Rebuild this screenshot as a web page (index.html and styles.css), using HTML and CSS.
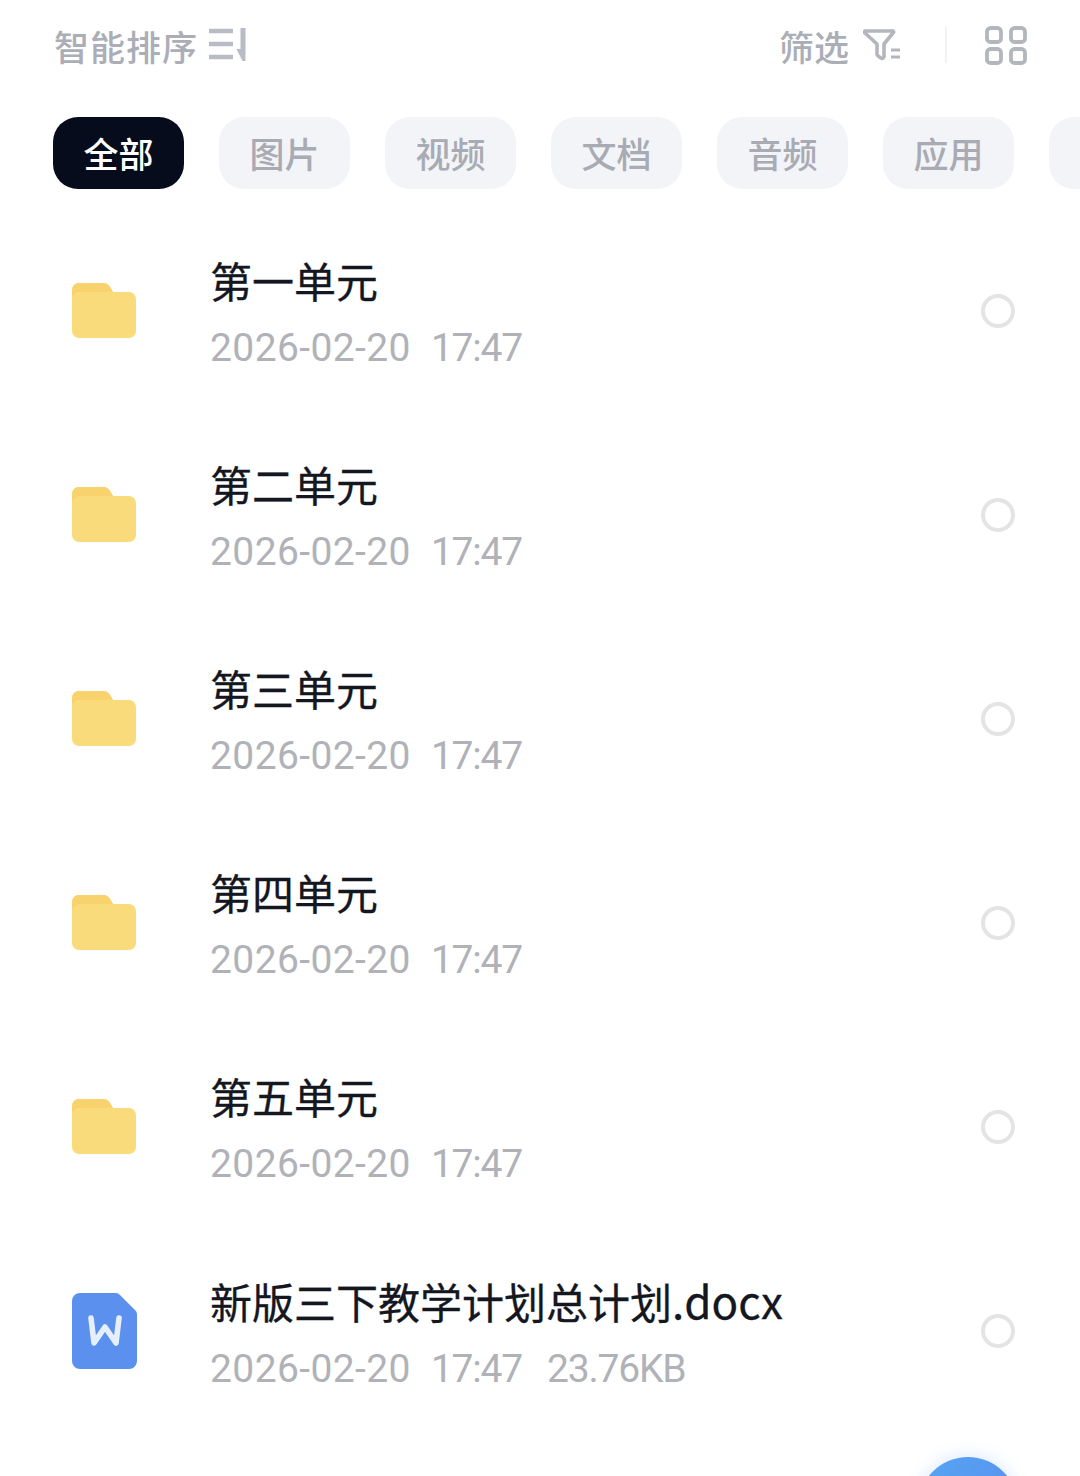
FILE: index.html
```html
<!DOCTYPE html>
<html>
  <head>
    <title>文件列表</title>
    <link rel="stylesheet" href="styles.css">
  </head>
  <body>
    <div class="toolbar">
      <div class="sort">
        <span>智能排序</span>
        <svg class="sort-icon" width="40" height="36" viewBox="0 0 40 36">
          <path d="M1 4h24M1 17h24M1 30h24" stroke="#b9bcc4" stroke-width="4.4" fill="none"/>
          <path d="M32.5 1h5v33h-3L28.5 22h4z" fill="#b9bcc4"/>
        </svg>
      </div>
      <div class="tools">
        <span>筛选</span>
        <svg class="filter-icon" width="38" height="34" viewBox="0 0 38 34">
          <path d="M3 3h26a1 1 0 0 1 1 2l-9 11v13a2 2 0 0 1-3 1l-3-2a3 3 0 0 1-1-2V16L2 5a1 1 0 0 1 1-2z" stroke="#b3b6bd" stroke-width="3.6" fill="none" stroke-linejoin="round"/>
          <path d="M28 22h9M28 29h9" stroke="#b3b6bd" stroke-width="3" fill="none"/>
        </svg>
        <div class="divider"></div>
        <svg class="grid-icon" width="42" height="39" viewBox="0 0 42 39">
          <rect x="2" y="2" width="14" height="14" rx="3.5" stroke="#b3b6bd" stroke-width="3.8" fill="none"/>
          <rect x="26" y="2" width="14" height="14" rx="3.5" stroke="#b3b6bd" stroke-width="3.8" fill="none"/>
          <rect x="2" y="23" width="14" height="14" rx="3.5" stroke="#b3b6bd" stroke-width="3.8" fill="none"/>
          <rect x="26" y="23" width="14" height="14" rx="3.5" stroke="#b3b6bd" stroke-width="3.8" fill="none"/>
        </svg>
      </div>
    </div>

    <div class="tabs">
      <div class="tab active">全部</div>
      <div class="tab">图片</div>
      <div class="tab">视频</div>
      <div class="tab">文档</div>
      <div class="tab">音频</div>
      <div class="tab">应用</div>
      <div class="tab"></div>
    </div>

    <ul class="files">
      <li class="file">
        <svg class="file-icon" width="64" height="56" viewBox="0 0 64 56"><use href="#folder"/></svg>
        <div class="info">
          <div class="name">第一单元</div>
          <div class="meta"><span class="date">2026-02-20</span><span class="time">17:47</span></div>
        </div>
        <div class="radio"></div>
      </li>
      <li class="file">
        <svg class="file-icon" width="64" height="56" viewBox="0 0 64 56"><use href="#folder"/></svg>
        <div class="info">
          <div class="name">第二单元</div>
          <div class="meta"><span class="date">2026-02-20</span><span class="time">17:47</span></div>
        </div>
        <div class="radio"></div>
      </li>
      <li class="file">
        <svg class="file-icon" width="64" height="56" viewBox="0 0 64 56"><use href="#folder"/></svg>
        <div class="info">
          <div class="name">第三单元</div>
          <div class="meta"><span class="date">2026-02-20</span><span class="time">17:47</span></div>
        </div>
        <div class="radio"></div>
      </li>
      <li class="file">
        <svg class="file-icon" width="64" height="56" viewBox="0 0 64 56"><use href="#folder"/></svg>
        <div class="info">
          <div class="name">第四单元</div>
          <div class="meta"><span class="date">2026-02-20</span><span class="time">17:47</span></div>
        </div>
        <div class="radio"></div>
      </li>
      <li class="file">
        <svg class="file-icon" width="64" height="56" viewBox="0 0 64 56"><use href="#folder"/></svg>
        <div class="info">
          <div class="name">第五单元</div>
          <div class="meta"><span class="date">2026-02-20</span><span class="time">17:47</span></div>
        </div>
        <div class="radio"></div>
      </li>
      <li class="file">
        <svg class="file-icon" width="66" height="78" viewBox="0 0 66 78">
          <path d="M8 1h36a6 6 0 0 1 4 2l15 15a6 6 0 0 1 2 4v47a8 8 0 0 1-8 8H8a8 8 0 0 1-8-8V9a8 8 0 0 1 8-8z" fill="#5b90ef"/>
          <path d="M19 26l3 25 11-16 11 16 3-25" stroke="#e6f0fd" stroke-width="5.6" fill="none" stroke-linecap="round" stroke-linejoin="round"/>
        </svg>
        <div class="info">
          <div class="name">新版三下教学计划总计划<span class="ext">.docx</span></div>
          <div class="meta"><span class="date">2026-02-20</span><span class="time">17:47</span><span class="size">23.76KB</span></div>
        </div>
        <div class="radio"></div>
      </li>
    </ul>

    <div class="fab-clip"><div class="fab"></div></div>

    <svg width="0" height="0" class="defs">
      <defs>
        <g id="folder">
          <path d="M7 0h24a9 9 0 0 1 7 4l3 5h16a7 7 0 0 1 7 7v32a7 7 0 0 1-7 7H7a7 7 0 0 1-7-7V7a7 7 0 0 1 7-7z" fill="#fadb7c"/>
          <path d="M7 0h24a9 9 0 0 1 7 4l3 5H8a8 8 0 0 0-8 6V7a7 7 0 0 1 7-7z" fill="#f7d26d"/>
        </g>
      </defs>
    </svg>
  </body>
</html>
```

FILE: styles.css
```css
* { box-sizing: border-box; }
html, body { margin: 0; padding: 0; }
body {
  width: 1080px;
  height: 1476px;
  overflow: hidden;
  position: relative;
  background: #fff;
  font-family: "Noto Sans CJK SC", "Noto Sans", sans-serif;
}

/* top bar */
.toolbar {
  height: 90px;
  padding: 0 53px 0 54px;
  display: flex;
  align-items: center;
  justify-content: space-between;
  color: #abaeb6;
  font-size: 35px;
  font-weight: 500;
}
.sort, .tools { display: flex; align-items: center; }
.sort span { letter-spacing: 1px; }
.sort-icon { margin-left: 10px; }
.filter-icon { margin-left: 14px; }
.divider { width: 2px; height: 36px; background: #f1f2f4; margin: 0 38px 0 44px; }

/* tabs */
.tabs {
  margin-top: 27px;
  padding-left: 53px;
  display: flex;
  gap: 35px;
  overflow: hidden;
}
.tab {
  flex: 0 0 131px;
  height: 72px;
  padding-bottom: 2px;
  border-radius: 25px;
  background: #f3f4f7;
  color: #a8abb3;
  font-size: 35px;
  font-weight: 500;
  display: flex;
  align-items: center;
  justify-content: center;
}
.tab.active { background: #060c1c; color: #fff; }

/* list */
.files { list-style: none; margin: 20px 0 0; padding: 0; }
.file {
  height: 204px;
  padding: 0 65px 0 72px;
  display: flex;
  align-items: center;
}
.file-icon { flex: none; }
.info { flex: 1; margin: 3px 0 0 74px; }
.file:last-child .info { margin-left: 72px; }
.name {
  font-size: 42px;
  line-height: 58px;
  color: #14171f;
  -webkit-text-stroke: .3px #14171f;
  white-space: nowrap;
}
.ext { font-size: 44px; }
.meta {
  margin-top: 13px;
  display: flex;
  gap: 20px;
  font-family: Roboto, "Noto Sans", sans-serif;
  font-size: 39px;
  line-height: 52px;
  color: #b0b2b7;
}
.date { letter-spacing: .4px; }
.time { letter-spacing: -1.2px; }
.size { margin-left: 5px; letter-spacing: -1.2px; }
.radio {
  flex: none;
  width: 34px;
  height: 34px;
  border: 4px solid #e4e4e4;
  border-radius: 50%;
}

/* floating button, only its top shows */
.fab-clip {
  position: absolute;
  left: 888px;
  top: 1437px;
  width: 160px;
  height: 39px;
  padding-top: 20px;
  overflow: hidden;
}
.fab {
  width: 100px;
  height: 100px;
  margin: 0 auto;
  border-radius: 50%;
  background: linear-gradient(120deg, #55a5f2, #5a8df0);
  box-shadow: 0 0 18px rgba(90, 160, 240, .25);
}
.defs { position: absolute; }
```
